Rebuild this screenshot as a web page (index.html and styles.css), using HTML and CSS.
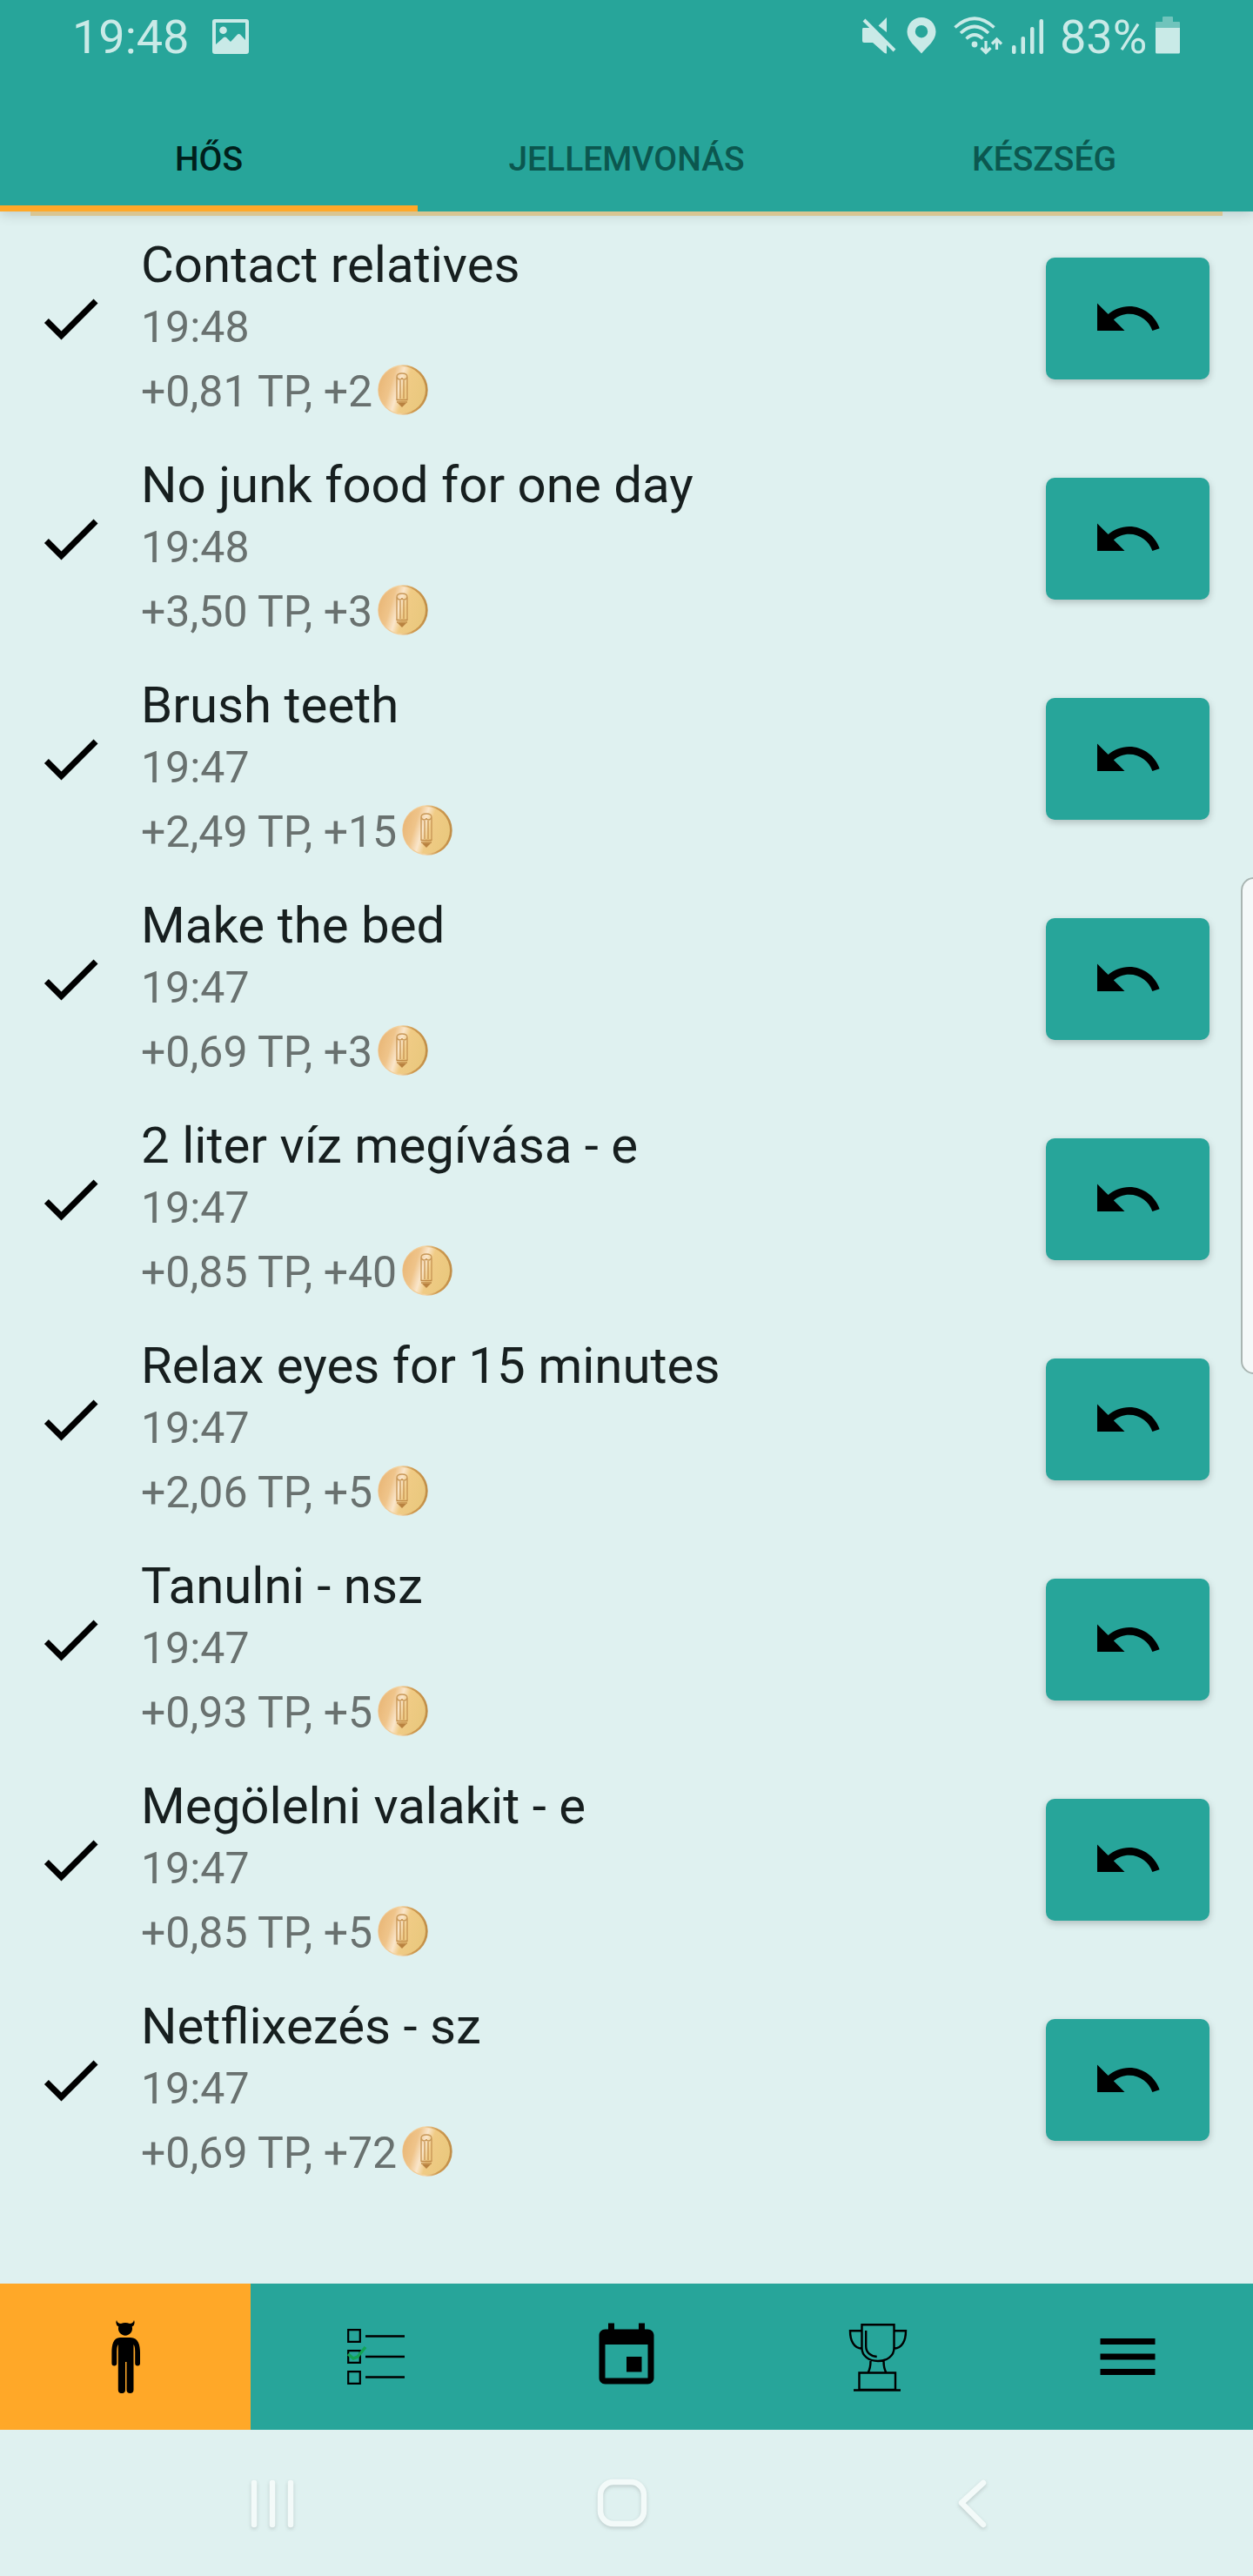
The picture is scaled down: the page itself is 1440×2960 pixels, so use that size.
FILE: index.html
```html
<!DOCTYPE html>
<html lang="hu">
<head>
<meta charset="utf-8">
<title>Hős</title>
<link rel="stylesheet" href="styles.css">
</head>
<body>
<svg class="defs" width="0" height="0">
  <defs>
    <linearGradient id="gold" x1="0" y1="0.35" x2="1" y2="0.65">
      <stop offset="0" stop-color="#e9b777"/><stop offset=".25" stop-color="#efc48a"/>
      <stop offset=".42" stop-color="#fae6cb"/><stop offset=".56" stop-color="#f0cb85"/><stop offset="1" stop-color="#e9c87d"/>
    </linearGradient>
    <linearGradient id="rim" x1="0" y1="0" x2="1" y2="0">
      <stop offset="0" stop-color="#efc48d"/><stop offset=".45" stop-color="#f4d29f"/><stop offset=".7" stop-color="#cf9a50"/><stop offset="1" stop-color="#c08e48"/>
    </linearGradient>
  </defs>
  <symbol id="check" viewBox="0 0 24 24"><path d="M9 16.17 4.83 12l-1.42 1.41L9 19 21 7l-1.41-1.41z"/></symbol>
  <symbol id="undo" viewBox="0 0 24 24"><path d="M12.5 8c-2.65 0-5.05.99-6.9 2.6L2 7v9h9l-3.62-3.62c1.39-1.16 3.16-1.88 5.12-1.88 3.54 0 6.55 2.31 7.6 5.5l2.37-.78C21.08 11.03 17.15 8 12.5 8z"/></symbol>
  <symbol id="coin" viewBox="0 0 58 58">
    <circle cx="29" cy="29" r="28.7" fill="url(#rim)"/>
    <circle cx="28" cy="29" r="27" fill="url(#gold)"/>
    <path d="M22 40V14q0-4 6-4t6 4v26M26 39V18M30 39V18M22 14q1 3 3.500 3t2.500-2q0 2 2.500 2t3.500-3" fill="none" stroke="#c99858" stroke-width="1.400"/>
    <path d="M21.500 40.500h13M22 43h12" stroke="#c08a48" stroke-width="1.300"/>
    <path d="m23 44 5 5 5-5z" fill="#b98240"/>
  </symbol>
</svg>

<header class="header">
  <div class="status">
    <span class="clock">19:48</span>
    <svg class="picture" width="42" height="40" viewBox="0 0 42 40"><path fill-rule="evenodd" d="M3 0h36q3 0 3 3v34q0 3-3 3H3q-3 0-3-3V3q0-3 3-3zM4 4v25l9-8q1.500-1 3 0l5 5 8-8.500q1.500-1 3 0L38 24V4zM12.500 8.500a4.300 4.300 0 1 1 0 8.600 4.300 4.300 0 0 1 0-8.600z"/></svg>
    <span class="spacer"></span>
    <svg class="mute" width="40" height="44" viewBox="0 0 40 44"><path d="M1 13h8l19 19v10.500q-2 0-3-1L12 30H2q-2 0-2-2V15q0-2 1-2zM18.500 10.500 28 1v17z"/><path d="M4 1l34 34" stroke="#27a59a" stroke-width="3"/><path d="M2 4l35 35" stroke="#c9eae7" stroke-width="4"/></svg>
    <svg class="pin" width="34" height="42" viewBox="0 0 34 42"><path fill-rule="evenodd" d="M17 0a16.500 16.500 0 0 1 16.500 16.500C33.500 27 23 34 17 41.500 11 34 .5 27 .5 16.500A16.500 16.500 0 0 1 17 0zm0 9a7.200 7.200 0 1 0 0 14.400A7.200 7.200 0 0 0 17 9z"/></svg>
    <svg class="wifi" width="56" height="44" viewBox="0 0 56 44"><g fill="none" stroke="#c9eae7" stroke-width="3.600"><path d="M1.500 12.500q22.500-20.500 45 0M8 19q16-15 32 0M14.500 25.500q9.500-9 19 0"/><path d="M37 28v13M31.500 36l5.500 5.500 5.500-5.500M49.500 38V26M44 31.500l5.500-5.500 5.500 5.500" stroke-width="3.200"/></g><circle cx="24" cy="32" r="3.400"/></svg>
    <svg class="signal" width="37" height="40" viewBox="0 0 37 40"><rect y="30" width="4.500" height="10" rx="2"/><rect x="10.500" y="20" width="4.500" height="20" rx="2"/><rect x="21" y="9" width="4.500" height="31" rx="2"/><rect x="31.500" width="4.500" height="40" rx="2"/></svg>
    <span class="percent">83%</span>
    <svg class="battery" width="28" height="43" viewBox="0 0 28 43"><path opacity=".45" d="M8 1q0-1 1-1h10q1 0 1 1v5h7q1 0 1 1v6H0V7q0-1 1-1h7z"/><path d="M0 13h28v28q0 1.500-1.500 1.500h-25Q0 42.500 0 41z"/></svg>
  </div>
  <nav class="tabs">
    <div class="tab tab-active">HŐS</div>
    <div class="tab">JELLEMVONÁS</div>
    <div class="tab">KÉSZSÉG</div>
  </nav>
</header>

<main class="list">
  <div class="divider"></div>
  <article class="row"><svg class="check"><use href="#check"/></svg><div class="info"><h2>Contact relatives</h2><p>19:48</p><p class="reward">+0,81 TP, +2<svg class="coin"><use href="#coin"/></svg></p></div><button class="undo"><svg><use href="#undo"/></svg></button></article>
  <article class="row"><svg class="check"><use href="#check"/></svg><div class="info"><h2>No junk food for one day</h2><p>19:48</p><p class="reward">+3,50 TP, +3<svg class="coin"><use href="#coin"/></svg></p></div><button class="undo"><svg><use href="#undo"/></svg></button></article>
  <article class="row"><svg class="check"><use href="#check"/></svg><div class="info"><h2>Brush teeth</h2><p>19:47</p><p class="reward">+2,49 TP, +15<svg class="coin"><use href="#coin"/></svg></p></div><button class="undo"><svg><use href="#undo"/></svg></button></article>
  <article class="row"><svg class="check"><use href="#check"/></svg><div class="info"><h2>Make the bed</h2><p>19:47</p><p class="reward">+0,69 TP, +3<svg class="coin"><use href="#coin"/></svg></p></div><button class="undo"><svg><use href="#undo"/></svg></button></article>
  <article class="row"><svg class="check"><use href="#check"/></svg><div class="info"><h2>2 liter víz megívása - e</h2><p>19:47</p><p class="reward">+0,85 TP, +40<svg class="coin"><use href="#coin"/></svg></p></div><button class="undo"><svg><use href="#undo"/></svg></button></article>
  <article class="row"><svg class="check"><use href="#check"/></svg><div class="info"><h2>Relax eyes for 15 minutes</h2><p>19:47</p><p class="reward">+2,06 TP, +5<svg class="coin"><use href="#coin"/></svg></p></div><button class="undo"><svg><use href="#undo"/></svg></button></article>
  <article class="row"><svg class="check"><use href="#check"/></svg><div class="info"><h2>Tanulni - nsz</h2><p>19:47</p><p class="reward">+0,93 TP, +5<svg class="coin"><use href="#coin"/></svg></p></div><button class="undo"><svg><use href="#undo"/></svg></button></article>
  <article class="row"><svg class="check"><use href="#check"/></svg><div class="info"><h2>Megölelni valakit - e</h2><p>19:47</p><p class="reward">+0,85 TP, +5<svg class="coin"><use href="#coin"/></svg></p></div><button class="undo"><svg><use href="#undo"/></svg></button></article>
  <article class="row"><svg class="check"><use href="#check"/></svg><div class="info"><h2>Netflixezés - sz</h2><p>19:47</p><p class="reward">+0,69 TP, +72<svg class="coin"><use href="#coin"/></svg></p></div><button class="undo"><svg><use href="#undo"/></svg></button></article>
</main>
<div class="edge-handle"></div>

<nav class="bottom">
  <div class="item item-active"><svg width="84" height="84" viewBox="0 0 84 84"><path d="M32 0q1 4 5 4 5-2 10 0 4 0 5-4 2 5-2.300 7.500a8 8 0 1 1-15.400 0Q30 5 32 0zM36 20h12c9 0 11 9 11 17v12.500a2.900 2.900 0 0 1-5.800 0V36q0-6-1.700-8v52a4 4 0 0 1-8 0V48h-1.500v32a4 4 0 0 1-8.200 0V28q-1.600 2-1.600 8v13.500a2.900 2.900 0 0 1-5.800 0V37c0-8 1.600-17 9.600-17z"/></svg></div>
  <div class="item"><svg width="84" height="84" viewBox="0 0 84 84"><g fill="none" stroke="#000"><path d="M10.200 11.200h13.600v13.600H10.200zM10.200 35.200h13.600v13.600H10.200zM10.200 59.200h13.600v13.600H10.200z" stroke-width="2.200"/><path d="M30 18.500h45M30 42h45M30 65.500h45" stroke-width="2.500"/><path d="m10 39 6 5 5-2 9-11" stroke="#13a455" stroke-width="3.500"/></g></svg></div>
  <div class="item"><svg width="84" height="84" viewBox="0 0 24 24"><path d="M17 12h-5v5h5v-5zM16 1v2H8V1H6v2H5c-1.110 0-1.990.9-1.990 2L3 19c0 1.100.89 2 2 2h14c1.100 0 2-.9 2-2V5c0-1.100-.9-2-2-2h-1V1h-2zm3 18H5V8h14v11z"/></svg></div>
  <div class="item"><svg width="84" height="84" viewBox="0 0 84 84"><g fill="none" stroke="#000" stroke-width="2.400"><path d="M24.500 5.200h37V32c0 9-8 15-18.500 15s-18.500-6-18.500-15zM24 12.200H11c0 11 4 20 13.500 20.500M61.500 12.200H75c0 11-4 20-13.500 20.500M34.500 47c0 7-1 10-3 13.500M49.500 47c0 7 1 10 3 13.500M21.500 60.500H63V80H21.500zM15 80.500h54"/><path d="M29.200 12v18c0 7 5 11.500 12.500 12"/></g></svg></div>
  <div class="item"><svg width="84" height="84" viewBox="0 0 24 24"><path d="M3 18h18v-2H3v2zm0-5h18v-2H3v2zm0-7v2h18V6H3z"/></svg></div>
</nav>

<footer class="system">
  <svg width="56" height="60" viewBox="0 0 56 60"><path d="M5 5v48M26 5v48M47 5v48"/></svg>
  <svg width="60" height="60" viewBox="0 0 60 60"><rect x="5" y="4" width="50" height="48" rx="15"/></svg>
  <svg width="40" height="60" viewBox="0 0 40 60"><path d="M32 5 7 28l25 25"/></svg>
</footer>
</body>
</html>
```
FILE: styles.css
```css
* { box-sizing: border-box; }
body { margin: 0; width: 1440px; height: 2960px; display: flex; flex-direction: column; position: relative; overflow: hidden; background: #dff1f0; font-family: Roboto, sans-serif; }
h2, p { margin: 0; font-weight: 400; white-space: nowrap; }
svg { display: block; flex: none; }
.defs { position: absolute; }

.header { height: 243px; flex: none; background: #27a59a; display: flex; flex-direction: column; position: relative; box-shadow: 0 3px 14px rgba(0, 0, 0, .16); }
.status { height: 84px; flex: none; display: flex; align-items: flex-start; padding: 19px 84px 0 83px; color: #c9eae7; fill: #c9eae7; font-size: 54px; line-height: 48px; }
.clock { width: 161px; }
.picture { margin-top: 3px; }
.spacer { flex: 1; }
.mute { margin-right: 11px; }
.pin { margin: 1px 20px 0 0; }
.wifi { margin-right: 11px; }
.signal { margin: 3px 18px 0 0; }
.percent { width: 110px; }
.tabs { flex: 1; display: flex; }
.tab { flex: 1; display: flex; align-items: center; justify-content: center; padding: 50px 0 4px; border-bottom: 7px solid transparent; font-size: 39px; font-weight: 500; line-height: 48px; color: #0b574f; }
.tab-active { color: #001f1b; border-color: #ffa828; }

.list { height: 2381px; flex: none; }
.divider { height: 5px; margin: 0 35px; background: #d9c592; position: relative; }
.row { height: 253px; display: flex; align-items: flex-start; padding: 22px 50px 0 39px; }
.check { width: 84px; height: 84px; margin-top: 54px; }
.info { flex: 1; margin-left: 39px; }
.info h2 { margin-bottom: 1px; font-size: 58.2px; line-height: 68px; color: #171f1f; }
.info p { font-size: 50px; line-height: 74px; color: #69716f; }
.info .reward { display: flex; align-items: center; }
.coin { width: 58px; height: 58px; margin: 0 0 5px 6px; }
.undo { width: 188px; height: 140px; margin-top: 26px; padding: 0; border: 0; border-radius: 10px; background: #27a59a; box-shadow: 0 3px 8px rgba(0, 0, 0, .22); display: flex; align-items: center; justify-content: center; }
.undo svg { width: 84px; height: 84px; }
.edge-handle { position: absolute; left: 1426px; top: 1008px; width: 30px; height: 571px; border: 2px solid #a9b5b2; border-radius: 18px; background: #f4f9f9; }

.bottom { height: 168px; flex: none; display: flex; background: #27a59a; }
.item { flex: 1; display: flex; align-items: center; justify-content: center; }
.item-active { background: #ffa828; }

.system { height: 168px; display: flex; align-items: flex-start; padding: 56px 0 0 287px; }
.system svg { fill: none; stroke: #f3faf9; stroke-width: 6.5px; stroke-linecap: round; stroke-linejoin: round; filter: drop-shadow(0 2px 2px rgba(0, 0, 0, .15)); }
.system svg:nth-child(2) { margin-left: 342px; }
.system svg:nth-child(3) { margin-left: 353px; }
```
